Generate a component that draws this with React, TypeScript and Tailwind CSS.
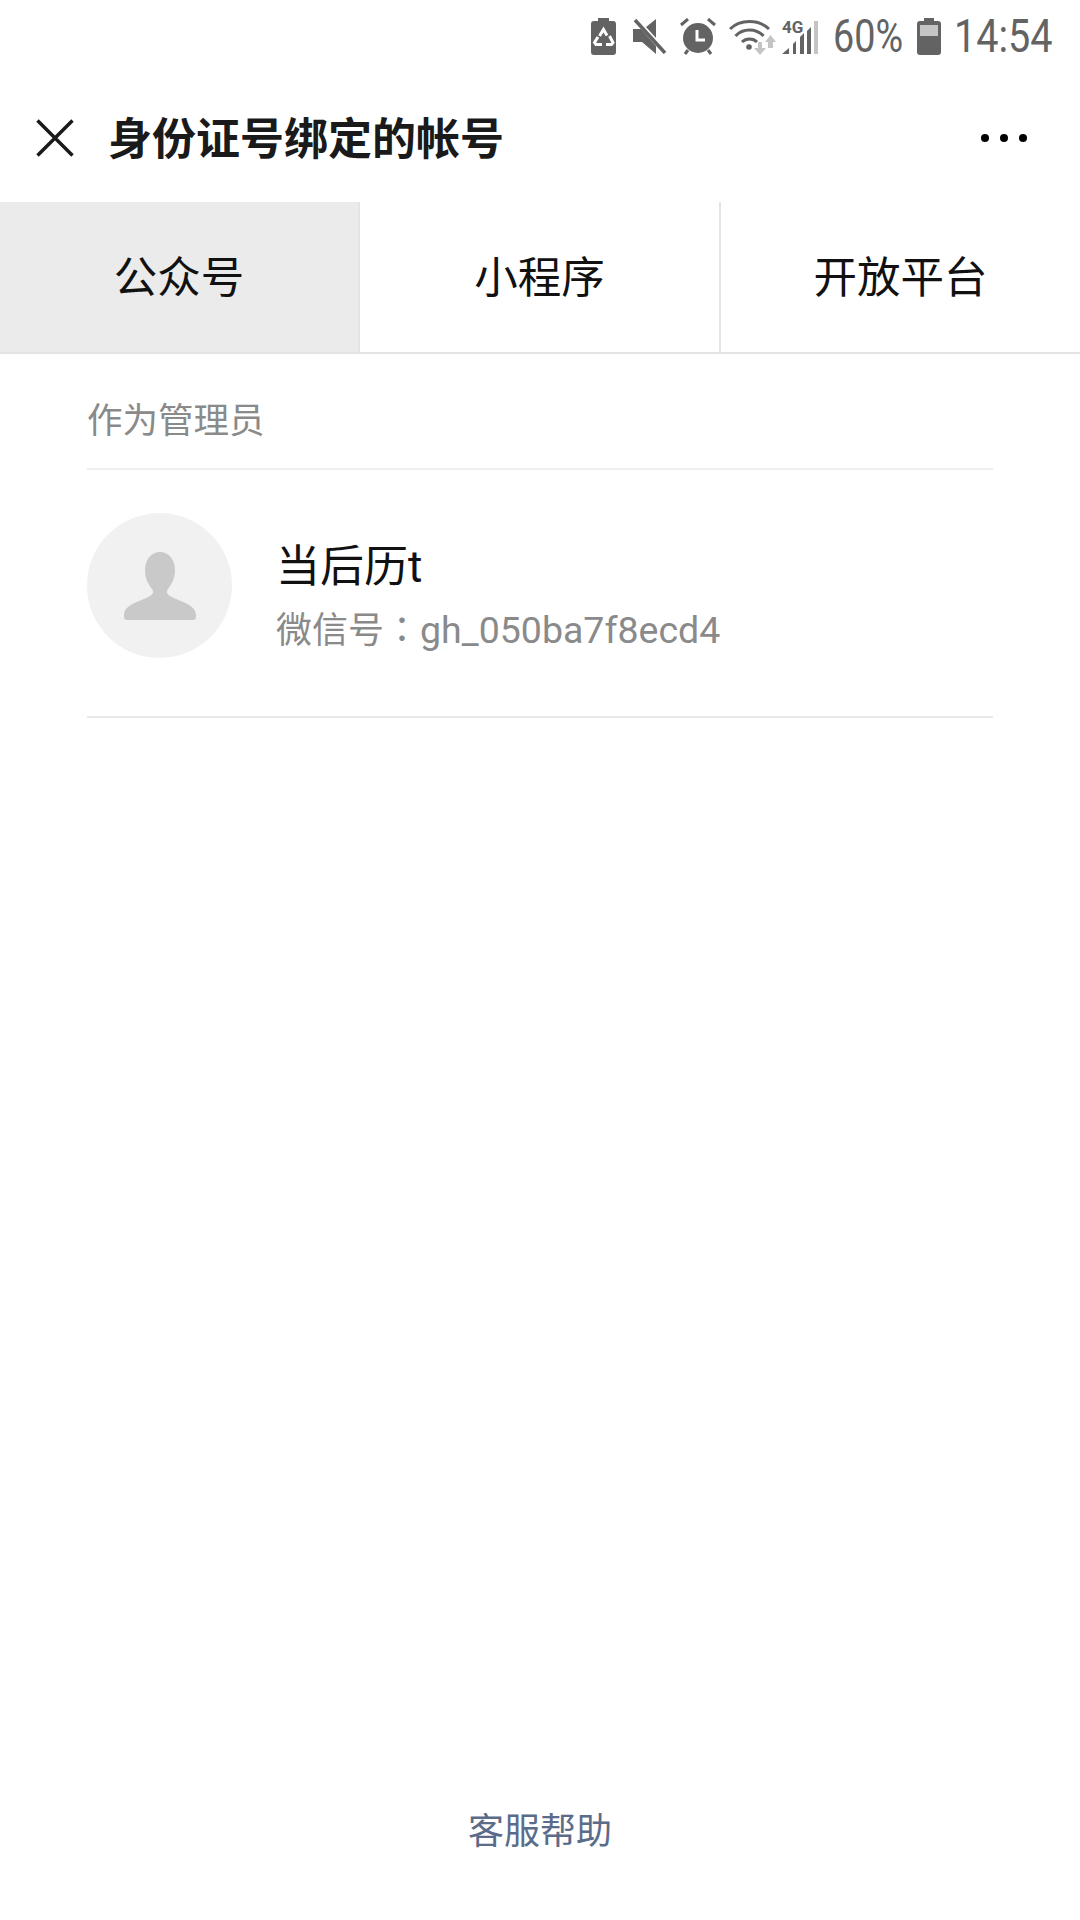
const font = "font-['Roboto','Noto_Sans_CJK_SC',sans-serif]";

function StatusIcons() {
  return (
    <div className="flex items-center">
      {/* battery saver */}
      <svg width="25" height="37" viewBox="0 0 25 37">
        <path d="M7 0h11v3h4a3 3 0 0 1 3 3v28a3 3 0 0 1-3 3H3a3 3 0 0 1-3-3V6a3 3 0 0 1 3-3h4z" fill="#636363" />
        <path d="M8.500 18l4-6.500 3.500 6M18.500 18l3.500 6.500-1.500 2H15M11 26.500H5l-1.500-2L7 19" stroke="#fff" strokeWidth="3" fill="none" />
      </svg>
      {/* muted speaker */}
      <svg width="34" height="36" viewBox="0 0 34 36" className="ml-[17px]">
        <path d="M0 11h8l15 17v8L9 24H0zM13 9l10-8v19z" fill="#636363" />
        <path d="M2 2l30 33" stroke="#636363" strokeWidth="3.500" />
      </svg>
      {/* alarm */}
      <svg width="36" height="37" viewBox="0 0 36 37" className="ml-[13px]">
        <circle cx="18" cy="20" r="15" fill="#636363" />
        <path d="M1 7l7-6M35 7l-7-6M8 32l-3 4M28 32l3 4" stroke="#636363" strokeWidth="3" />
        <path d="M17 12v10h8" stroke="#fff" strokeWidth="3" fill="none" />
      </svg>
      {/* wifi */}
      <svg width="48" height="37" viewBox="0 0 48 37" className="ml-[13px]">
        <path d="M1 11C11 1 30 1 40 11M6.500 18C14 10 27 10 34.500 18M13 24c4-4 11-4 15 0" stroke="#636363" strokeWidth="3" fill="none" />
        <circle cx="20" cy="29" r="2.800" fill="#636363" />
        <path d="M29 24h4v6h4l-6 7-6-7h4zM39 30v-6h-3l5.500-7 5.500 7h-3v6z" fill="#c4c4c4" />
      </svg>
      {/* 4G + signal */}
      <svg width="37" height="37" viewBox="0 0 37 37" className="ml-[5px]">
        <text x="0" y="15" fontFamily="Roboto" fontWeight="700" fontSize="17" fill="#636363">4G</text>
        <path d="M0 36l7-6v6zM11 36V26l3-3v13zM18 36V19l4-4v21zM25 36V13l4-4v27z" fill="#636363" />
        <path d="M32 36V3h4v33z" fill="#c4c4c4" />
      </svg>
      <span className="ml-[14px] w-[70px] origin-left scale-x-[0.82] text-[46px] leading-none whitespace-nowrap text-[#636363]">60%</span>
      {/* battery */}
      <svg width="24" height="37" viewBox="0 0 24 37" className="ml-[14px]">
        <path d="M7 0h10v3h4a3 3 0 0 1 3 3v28a3 3 0 0 1-3 3H3a3 3 0 0 1-3-3V6a3 3 0 0 1 3-3h4z" fill="#636363" />
        <rect x="3" y="7" width="18" height="11" fill="#c4c4c4" />
      </svg>
      <span className="ml-[13px] w-[97px] origin-left scale-x-[0.86] text-[46px] leading-none whitespace-nowrap text-[#636363]">14:54</span>
    </div>
  );
}

const tabs = ["公众号", "小程序", "开放平台"];

export default function App() {
  return (
    <div className={`flex h-[1920px] w-[1080px] flex-col overflow-hidden bg-white ${font}`}>
      <div className="flex h-[70px] items-center justify-end pr-[29px] pt-[2px]">
        <StatusIcons />
      </div>

      <div className="flex h-[132px] items-center pl-[36px] pr-[53px] pt-[4px]">
        <svg width="38" height="38" viewBox="0 0 38 38">
          <path d="M1.500 1.500l35 35M36.500 1.500l-35 35" stroke="#1a1a1a" strokeWidth="3.500" />
        </svg>
        <span className="ml-[34px] mt-[3px] text-[44px] leading-none font-bold text-[#1a1a1a]">身份证号绑定的帐号</span>
        <div className="ml-auto flex gap-[11px]">
          <span className="size-[8px] rounded-full bg-black" />
          <span className="size-[8px] rounded-full bg-black" />
          <span className="size-[8px] rounded-full bg-black" />
        </div>
      </div>

      <div className="grid h-[152px] grid-cols-[360px_361px_1fr] border-b-2 border-[#e4e4e4]">
        {tabs.map((t, i) => (
          <div
            key={t}
            className={`flex items-center justify-center pt-[3px] text-[43.500px] leading-none text-[#111] ${
              i === 0 ? "bg-[#ebebeb]" : ""
            } ${i < 2 ? "border-r-2 border-[#e4e4e4]" : ""}`}
          >
            {t}
          </div>
        ))}
      </div>

      <div className="flex flex-1 flex-col px-[87px]">
        <div className="flex h-[116px] items-center border-b-2 border-[#efefef] pt-[22px] text-[35.500px] leading-none text-[#8a8a8a]">
          作为管理员
        </div>
        <div className="flex h-[248px] items-start border-b-2 border-[#e9e9e9] pt-[43px]">
          <div className="flex size-[145px] items-center justify-center rounded-full bg-[#f1f1f1]">
            <svg width="72" height="68" viewBox="0 0 72 68">
              <path
                d="M36 0c9 0 15 8 15 18 0 9-4 15-7 19-2 3-1 5 2 7 8 5 26 8 26 19v2a3 3 0 0 1-3 3H3a3 3 0 0 1-3-3v-2c0-11 18-14 26-19 3-2 4-4 2-7-3-4-7-10-7-19C21 8 27 0 36 0z"
                fill="#c9c9c9"
              />
            </svg>
          </div>
          <div className="ml-[44px] mt-[28px] flex flex-col">
            <span className="text-[44px] leading-[52px] text-[#111]">当后历t</span>
            <span className="mt-[12px] text-[37.500px] leading-[44px] whitespace-nowrap text-[#8a8a8a]">
              <span className="text-[36px]">微信号</span>
              <span className="font-['Noto_Sans_CJK_TC',sans-serif] text-[36px]">：</span>gh_050ba7f8ecd4
            </span>
          </div>
        </div>
      </div>

      <div className="flex h-[178px] justify-center pt-[72px] text-[36px] leading-none text-[#5b6b8a]">
        客服帮助
      </div>
    </div>
  );
}
